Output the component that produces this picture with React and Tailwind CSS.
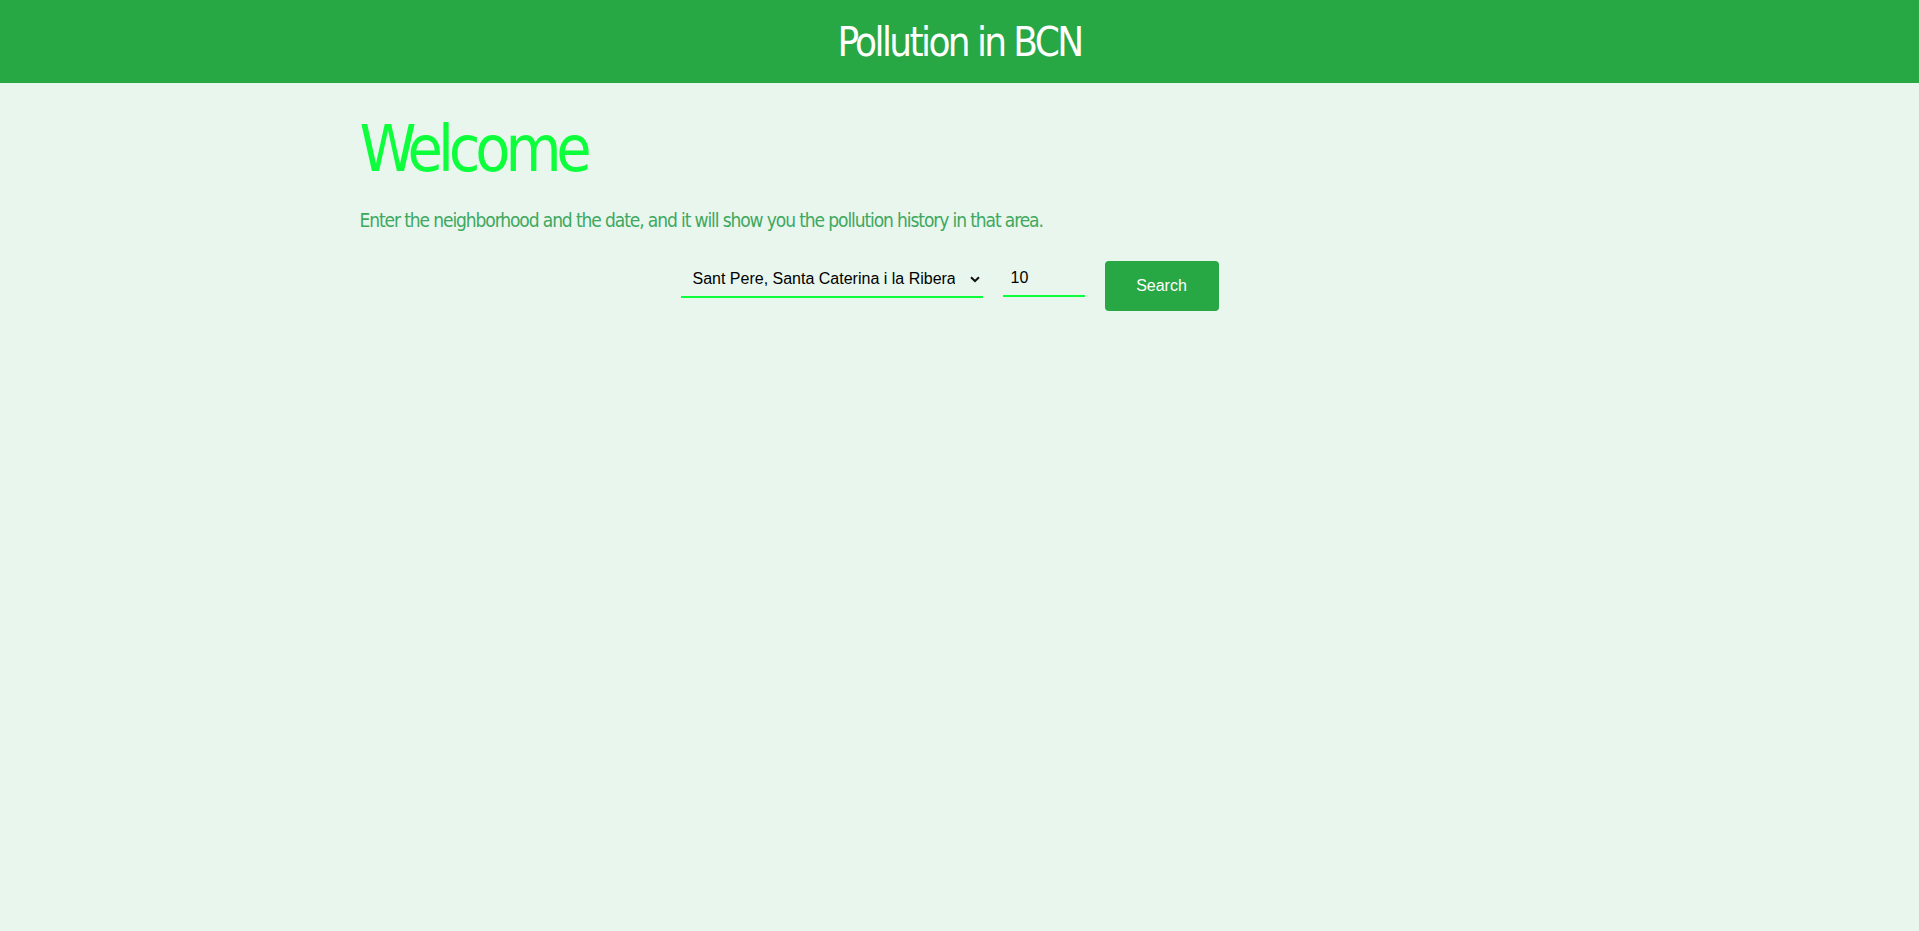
import React from 'react';

const barrios = ['Sant Pere, Santa Caterina i la Ribera', 'el Raval', 'el Barri Gòtic', 'la Barceloneta', 'el Poblenou'];

function Chevron() {
  return <svg className="pointer-events-none absolute left-[289px] top-[15px]" width="10" height="7" viewBox="0 0 10 7">
      <path d="M1 1.2 L5 5 L9 1.2" fill="none" stroke="#111" strokeWidth="2" />
    </svg>;
}

export default function App() {
  const [barrio, setBarrio] = React.useState(barrios[0]);
  const [dia, setDia] = React.useState('10');

  return <div className="min-h-screen bg-[#e8f6ee] font-['Liberation_Sans_Narrow','DejaVu_Sans_Condensed',sans-serif]">
      {/* cabecera */}
      <header className="h-[83px] bg-[#28a745] flex items-center justify-center">
        <h2 className="text-[40px] text-white leading-normal tracking-[-0.065em]">Pollution in BCN</h2>
      </header>

      <main className="w-[1200px] mx-auto">
        <h1 className="mt-[28px] text-[64px] leading-[1.2] text-[#0dff3c] tracking-[-0.08em]">Welcome</h1>
        <p className="mt-[18px] text-[19px] leading-[1.5] text-[#3ea85e] tracking-[-0.058em]">
          Enter the neighborhood and the date, and it will show you the pollution history in that area.
        </p>

        {/* formulario */}
        <form className="mt-[27px] flex items-start justify-center gap-5 pr-5 font-['Liberation_Sans',Arial,sans-serif]" onSubmit={e => e.preventDefault()}>
          <div className="relative">
            <select value={barrio} onChange={e => setBarrio(e.target.value)} className="appearance-none w-[302px] h-[37px] pl-3 pr-7 bg-transparent text-base text-black border-0 border-b-2 border-[#0dff3c] outline-none">
              {barrios.map(b => <option key={b}>{b}</option>)}
            </select>
            <Chevron />
          </div>
          <input value={dia} onChange={e => setDia(e.target.value)} className="w-[82px] h-[36px] pl-2 bg-transparent text-base text-black border-0 border-b-2 border-[#0dff3c] outline-none" />
          <button type="submit" className="w-[114px] h-[50px] rounded bg-[#28a745] text-white text-base">Search</button>
        </form>
      </main>
    </div>;
}
